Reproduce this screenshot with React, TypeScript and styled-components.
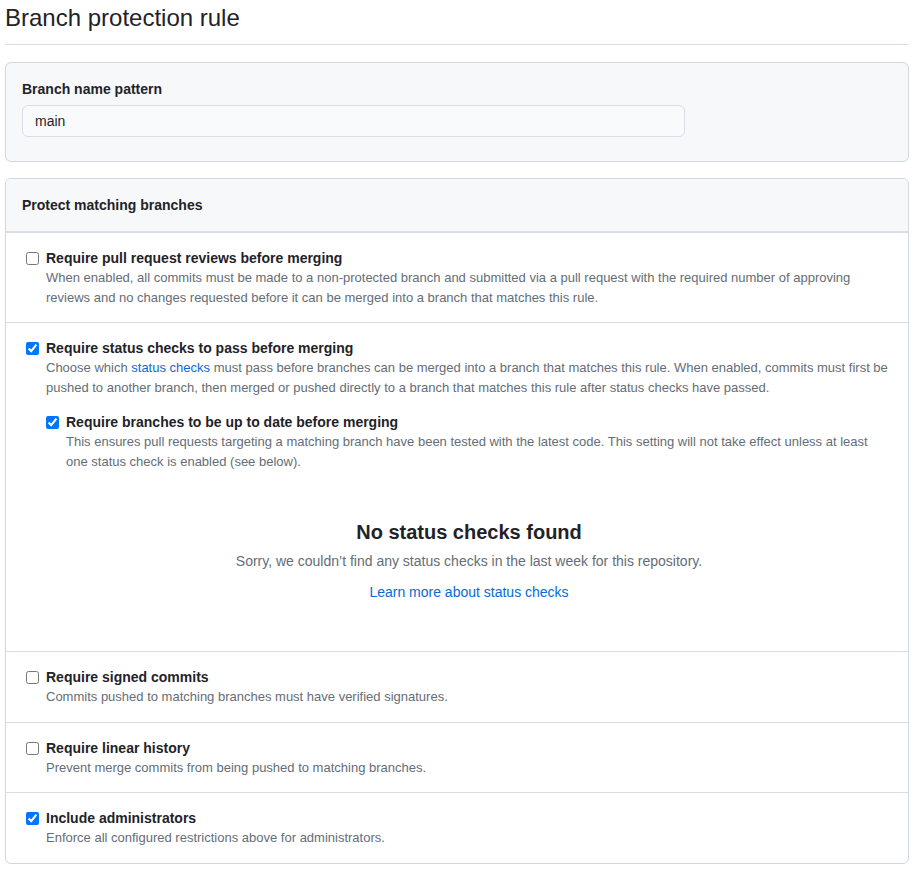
import React from "react";
import styled, { createGlobalStyle } from "styled-components";

const Global = createGlobalStyle`
  html, body { margin: 0; padding: 0; background: #ffffff; }
  body {
    font-family: "Liberation Sans", Arial, sans-serif;
    color: #1f2328;
    font-size: 14px;
  }
`;

const Page = styled.div`
  padding: 0 8px 0 5px;
`;

const Title = styled.h2`
  margin: 0;
  padding-bottom: 8px;
  font-size: 24px;
  font-weight: 400;
  line-height: 36px;
  color: #1f2328;
  border-bottom: 1px solid #d8dee4;
`;

const Box = styled.div<{ $gray?: boolean; $gap: number }>`
  margin-top: ${(p) => p.$gap}px;
  border: 1px solid #d0d7de;
  border-radius: 6px;
  background: ${(p) => (p.$gray ? "#f6f8fa" : "#ffffff")};
  overflow: hidden;
`;

const PatternBody = styled.div`
  padding: 16px;
`;

const FieldLabel = styled.label`
  display: block;
  font-weight: 700;
  font-size: 14px;
  line-height: 20px;
  margin-bottom: 6px;
`;

const TextInput = styled.input`
  display: block;
  box-sizing: border-box;
  width: 663px;
  height: 32px;
  padding: 5px 12px;
  font-family: "Liberation Sans", Arial, sans-serif;
  font-size: 14px;
  color: #1f2328;
  background: #f9fafb;
  border: 1px solid #d8dee4;
  border-radius: 6px;
  outline: none;
  margin-bottom: 8px;
`;

const BoxHeader = styled.div`
  background: #f6f8fa;
  padding: 16px 16px 16px;
  font-weight: 700;
  font-size: 14px;
  line-height: 20px;
  border-bottom: 1px solid #d8dee4;
`;

const Row = styled.div`
  padding: 15px 16px;
  border-top: 1px solid #d8dee4;
  &:first-of-type { border-top: none; padding-top: 16px; padding-bottom: 14px; }
`;

const Check = styled.div<{ $nested?: boolean }>`
  display: flex;
  align-items: flex-start;
  margin-top: ${(p) => (p.$nested ? "15px" : "0")};
  margin-left: ${(p) => (p.$nested ? "20px" : "0")};
`;

const Box13 = styled.input`
  width: 13px;
  height: 13px;
  margin: 4px 7px 0 4px;
  flex: none;
`;

const CheckText = styled.div`
  flex: 1;
  min-width: 0;
`;

const CheckLabel = styled.div`
  font-weight: 700;
  font-size: 14px;
  line-height: 20px;
  color: #1f2328;
`;

const Note = styled.p`
  margin: 0;
  font-size: 13px;
  line-height: 19.5px;
  color: #656d76;
`;

const Link = styled.a`
  color: #0969da;
  text-decoration: none;
`;

const Blankslate = styled.div`
  text-align: center;
  margin-left: 24px;
  padding: 46px 0 33px;
`;

const BlankTitle = styled.h3`
  margin: 0 0 4px;
  font-size: 20px;
  line-height: 30px;
  font-weight: 700;
  color: #1f2328;
`;

const BlankText = styled.p`
  margin: 0 0 10px;
  font-size: 14px;
  line-height: 21px;
  color: #656d76;
`;

const BlankLink = styled.a`
  font-size: 14px;
  line-height: 21px;
  color: #0969da;
  text-decoration: none;
`;

type OptProps = {
  checked?: boolean;
  label: string;
  nested?: boolean;
  children: React.ReactNode;
};

const Option = ({ checked, label, nested, children }: OptProps) => (
  <Check $nested={nested}>
    <Box13 type="checkbox" defaultChecked={checked} />
    <CheckText>
      <CheckLabel>{label}</CheckLabel>
      <Note>{children}</Note>
    </CheckText>
  </Check>
);

export default function App() {
  return (
    <Page>
      <Global />
      <Title>Branch protection rule</Title>
      <Box $gray $gap={17}>
        <PatternBody>
          <FieldLabel>Branch name pattern</FieldLabel>
          <TextInput defaultValue="main" />
        </PatternBody>
      </Box>
      <Box $gap={16}>
        <BoxHeader>Protect matching branches</BoxHeader>
        <Row>
          <Option label="Require pull request reviews before merging">
            When enabled, all commits must be made to a non-protected branch and submitted via a pull request with the required number of approving reviews and no changes requested before it can be merged into a branch that matches this rule.
          </Option>
        </Row>
        <Row>
          <Option checked label="Require status checks to pass before merging">
            Choose which <Link href="#">status checks</Link> must pass before branches can be merged into a branch that matches this rule. When enabled, commits must first be pushed to another branch, then merged or pushed directly to a branch that matches this rule after status checks have passed.
          </Option>
          <Option nested checked label="Require branches to be up to date before merging">
            This ensures pull requests targeting a matching branch have been tested with the latest code. This setting will not take effect unless at least one status check is enabled (see below).
          </Option>
          <Blankslate>
            <BlankTitle>No status checks found</BlankTitle>
            <BlankText>Sorry, we couldn’t find any status checks in the last week for this repository.</BlankText>
            <BlankLink href="#">Learn more about status checks</BlankLink>
          </Blankslate>
        </Row>
        <Row>
          <Option label="Require signed commits">
            Commits pushed to matching branches must have verified signatures.
          </Option>
        </Row>
        <Row>
          <Option label="Require linear history">
            Prevent merge commits from being pushed to matching branches.
          </Option>
        </Row>
        <Row>
          <Option checked label="Include administrators">
            Enforce all configured restrictions above for administrators.
          </Option>
        </Row>
      </Box>
    </Page>
  );
}
